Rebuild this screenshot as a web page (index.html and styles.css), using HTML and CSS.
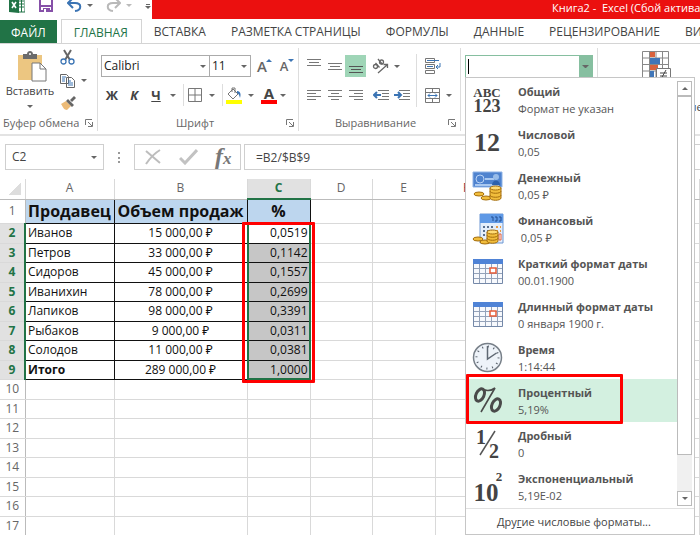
FILE: index.html
```html
<!DOCTYPE html>
<html lang="ru">
<head>
	<meta charset="utf-8">
	<meta name="viewport" content="width=device-width, initial-scale=1">
	<title>Книга2 - Excel</title>
	<link rel="stylesheet" href="styles.css">
</head>
<body>
<div class="topbar">
	<div class="quick">
		<svg class="xl" width="16" height="16" viewBox="0 0 16 16"><path d="M9 1h7v14H9z" fill="#fff" stroke="#217346"/><path d="M10 4h5M10 7h5M10 10h5M12.500 1v14" stroke="#217346"/><path d="M0 1l10-1v16L0 15z" fill="#217346"/><path d="M3 5l4 6M7 5l-4 6" stroke="#fff" stroke-width="1.600"/></svg>
		<button class="q-save" aria-label="Сохранить"><svg width="14" height="16" viewBox="0 0 14 16"><path d="M1 1h12v13H1z" fill="#fff" stroke="#8650a8" stroke-width="2"/><path d="M1 8h12v2H1zM4 11h7v4H4z" fill="#8650a8"/><path d="M5 12h2v3H5z" fill="#fff"/></svg></button>
		<button class="q-undo" aria-label="Отменить"><svg width="15" height="16" viewBox="0 0 15 16"><path d="M1 6h7c7 0 7 7 0 8M6 1L1 6l5 5" fill="none" stroke="#3b74b4" stroke-width="2"/></svg><i class="caret"></i></button>
		<button class="q-redo" aria-label="Вернуть"><svg width="15" height="16" viewBox="0 0 15 16"><path d="M14 6H7C0 6 0 13 7 14M9 1l5 5-5 5" fill="none" stroke="#b9b9b9" stroke-width="2"/></svg><i class="caret light"></i></button>
		<button class="q-more" aria-label="Настройка панели"><i class="caret"></i></button>
	</div>
	<div class="title">Книга2 -&nbsp; Excel (Сбой активации продукта)</div>
</div>

<nav class="tabs">
	<a href="#" class="file">ФАЙЛ</a>
	<a href="#" class="active">ГЛАВНАЯ</a>
	<a href="#">ВСТАВКА</a>
	<a href="#">РАЗМЕТКА СТРАНИЦЫ</a>
	<a href="#">ФОРМУЛЫ</a>
	<a href="#">ДАННЫЕ</a>
	<a href="#">РЕЦЕНЗИРОВАНИЕ</a>
	<a href="#">ВИД</a>
</nav>

<div class="ribbon">
	<div class="group clipboard">
		<div class="tools">
			<button class="paste">
				<svg width="30" height="32" viewBox="0 0 30 32"><path d="M1 4h24v25H1z" fill="#ecc681"/><path d="M6 3h4c0-4 6-4 6 0h4v5H6z" fill="#6b6b6b"/><circle cx="13" cy="3" r="1" fill="#fff"/><path d="M15 12h8l6 6v12H15z" fill="#fff" stroke="#777"/><path d="M23 12v6h6" fill="none" stroke="#777"/></svg>
				<span>Вставить</span>
				<i class="caret"></i>
			</button>
			<div class="side">
				<button aria-label="Вырезать"><svg width="15" height="16" viewBox="0 0 15 16"><path d="M4 1l6 10M11 1L5 11" stroke="#666" stroke-width="2"/><circle cx="3.500" cy="12.500" r="2.500" fill="#fff" stroke="#3b74b4" stroke-width="1.300"/><circle cx="11.500" cy="12.500" r="2.500" fill="#fff" stroke="#3b74b4" stroke-width="1.300"/></svg></button>
				<button aria-label="Копировать"><svg width="15" height="15" viewBox="0 0 15 15"><path d="M.5 1.500h6l2 2v7h-8zM6.500 4.500h5l3 3v7h-8z" fill="#fff" stroke="#666"/><path d="M2 4h4M2 6h3M2 8h3M8 8h3M8 10h5M8 12h5" stroke="#3b74b4"/></svg><i class="caret"></i></button>
				<button aria-label="Формат по образцу"><svg width="16" height="15" viewBox="0 0 16 15"><path d="M1 8l5-3 5 5-4 4c-3 0-4-3-6-6z" fill="#ecbb78"/><path d="M6 5l2-2 6 6-2 2zM10 4l4-4 2 2-4 4z" fill="#666"/></svg></button>
			</div>
		</div>
		<div class="caption"><span>Буфер обмена</span><svg class="launch" width="8" height="8" viewBox="0 0 8 8"><use href="#corner"/></svg></div>
	</div>

	<div class="group font">
		<div class="tools rows">
			<div class="row">
				<label class="pick name"><select aria-label="Шрифт"><option>Calibri</option></select><i class="caret"></i></label>
				<label class="pick size"><select aria-label="Размер шрифта"><option>11</option></select><i class="caret"></i></label>
				<button class="grow" aria-label="Увеличить размер">A<i class="tri up"></i></button>
				<button class="shrink" aria-label="Уменьшить размер">A<i class="tri"></i></button>
			</div>
			<div class="row letters">
				<button class="b">Ж</button>
				<button class="i">К</button>
				<button class="u">Ч</button>
				<i class="caret"></i>
				<span class="sep"></span>
				<button aria-label="Границы"><svg width="14" height="14" viewBox="0 0 14 14"><path d="M.5.5h13v13H.5zM7 0v14M0 7h14" fill="none" stroke="#777"/></svg></button>
				<i class="caret"></i>
				<span class="sep"></span>
				<button aria-label="Цвет заливки"><svg width="16" height="17" viewBox="0 0 16 17"><path d="M2 7l5-5 5 5-5 5zM6 5V1h3v5" fill="#fff" stroke="#777"/><path d="M11 4c4 0 4 4 3 7-1-3-1-4-3-5z" fill="#3b74b4"/><path d="M0 13h16v4H0z" fill="#ff0"/></svg></button>
				<i class="caret"></i>
				<button class="color" aria-label="Цвет текста">A</button>
				<i class="caret"></i>
			</div>
		</div>
		<div class="caption"><span>Шрифт</span><svg class="launch" width="8" height="8" viewBox="0 0 8 8"><use href="#corner"/></svg></div>
	</div>

	<div class="group align">
		<div class="tools">
			<div class="rows">
				<div class="row">
					<button aria-label="По верхнему краю"><svg width="14" height="16" viewBox="0 0 14 16"><path d="M0 1.500h14M2 4.500h10M0 7.500h14" stroke="#777"/></svg></button>
					<button aria-label="По середине"><svg width="14" height="16" viewBox="0 0 14 16"><path d="M0 5.500h14M2 8.500h10M0 11.500h14" stroke="#777"/></svg></button>
					<button class="on" aria-label="По нижнему краю"><svg width="14" height="16" viewBox="0 0 14 16"><path d="M0 8.500h14M2 11.500h10M0 14.500h14" stroke="#555"/></svg></button>
					<button class="gap" aria-label="Ориентация"><svg width="17" height="16" viewBox="0 0 17 16"><g fill="none" stroke="#666" stroke-width="1.300"><circle cx="3.500" cy="8.500" r="2"/><path d="M3.500 5l4 4.500M6 1l4.500 5.500"/><circle cx="9.500" cy="4" r="2"/><path d="M6 15l9-8M11.500 6.500h4V10"/></g></svg></button>
					<i class="caret"></i>
				</div>
				<div class="row">
					<button aria-label="По левому краю"><svg width="14" height="14" viewBox="0 0 14 14"><path d="M0 2.500h14M0 5.500h9M0 8.500h14M0 11.500h9" stroke="#777"/></svg></button>
					<button aria-label="По центру"><svg width="14" height="14" viewBox="0 0 14 14"><path d="M0 2.500h14M3 5.500h8M0 8.500h14M3 11.500h8" stroke="#777"/></svg></button>
					<button aria-label="По правому краю"><svg width="14" height="14" viewBox="0 0 14 14"><path d="M0 2.500h14M5 5.500h9M0 8.500h14M5 11.500h9" stroke="#777"/></svg></button>
					<button class="gap" aria-label="Уменьшить отступ"><svg width="16" height="14" viewBox="0 0 16 14"><path d="M5 2.500h11M9 5.500h7M9 8.500h7M5 11.500h11" stroke="#777"/><path d="M8 7H2M4 4L1 7l3 3" fill="none" stroke="#3b74b4" stroke-width="2"/></svg></button>
					<button aria-label="Увеличить отступ"><svg width="16" height="14" viewBox="0 0 16 14"><path d="M5 2.500h11M9 5.500h7M9 8.500h7M5 11.500h11" stroke="#777"/><path d="M0 7h6M4 4l3 3-3 3" fill="none" stroke="#3b74b4" stroke-width="2"/></svg></button>
				</div>
			</div>
			<span class="sep tall"></span>
			<div class="rows">
				<div class="row">
					<button aria-label="Перенести текст"><svg width="16" height="16" viewBox="0 0 16 16"><path d="M.5.5h9v4h-9zM.5 6.500h9v4h-9zM.5 12.500h9v3h-9z" fill="#fff" stroke="#777"/><path d="M2 2.500h12M2 8.500h6M15 5v4h-4M13 7l-2 2 2 2" fill="none" stroke="#3b74b4"/></svg></button>
				</div>
				<div class="row">
					<button aria-label="Объединить"><svg width="15" height="15" viewBox="0 0 15 15"><path d="M.5.5h14v14H.5zM0 4.500h15M0 10.500h15M7.500 0v4M7.500 11v4" fill="#fff" stroke="#777"/><path d="M3 7.500h9M5 5.500l-2 2 2 2M10 5.500l2 2-2 2" fill="none" stroke="#3b74b4"/></svg></button>
					<i class="caret"></i>
				</div>
			</div>
		</div>
		<div class="caption"><span>Выравнивание</span><svg class="launch" width="8" height="8" viewBox="0 0 8 8"><g id="corner"><path d="M.5 6V.5H7M3 3l4 4M7.500 3v4.500H3" fill="none" stroke="#777"/></g></svg></div>
	</div>

	<div class="group number">
		<div class="combo">
			<input type="text" aria-label="Числовой формат">
			<button aria-label="Открыть список"><i class="caret"></i></button>
		</div>

		<div class="menu">
			<div class="scroll">
				<div class="formats">
					<button class="format">
						<svg width="32" height="32" viewBox="0 0 32 32"><text x="15" y="13" class="ico" font-size="13">ABC</text><text x="15" y="28" class="ico" font-size="18">123</text></svg>
						<span><b>Общий</b><small>Формат не указан</small></span>
					</button>
					<button class="format">
						<svg width="32" height="32" viewBox="0 0 32 32"><text x="15" y="24" class="ico" font-size="26">12</text></svg>
						<span><b>Числовой</b><small>0,05</small></span>
					</button>
					<button class="format">
						<svg width="32" height="32" viewBox="0 0 32 32"><path d="M1 2h29v15H1z" fill="#4f83cf" stroke="#8fb3e6"/><circle cx="8" cy="9" r="4" fill="none" stroke="#b9d3f5"/><path d="M13 9h9M3 15h24" stroke="#a9c8f0" stroke-width="2"/><circle cx="24" cy="7" r="3" fill="#98bce9"/><path d="M20 15c0-6 8-6 8 0z" fill="#2d61ad"/><g fill="#f1bd3c" stroke="#a46d0d"><ellipse cx="14" cy="28" rx="5" ry="2"/><ellipse cx="7" cy="24" rx="5" ry="2"/><path d="M18 18v10c0 3 11 3 11 0V18z"/><path d="M18 21c0 3 11 3 11 0M18 25c0 3 11 3 11 0"/><ellipse cx="23.500" cy="18" rx="5.500" ry="2" fill="#ffdc76"/></g></svg>
						<span><b>Денежный</b><small>0,05 ₽</small></span>
					</button>
					<button class="format">
						<svg width="32" height="32" viewBox="0 0 32 32"><path d="M8 1h23v29H8z" fill="#e4eefb" stroke="#6d97d3"/><path d="M8 1h23v9H8z" fill="#5f99e6"/><path d="M19 4h2v4M23 4h2v4h-2M27 4h2v4h-2" fill="none" stroke="#234f91"/><path d="M11 14h12M11 18h12M11 22h8" stroke="#596f8f" stroke-width="2" stroke-dasharray="2"/><path d="M24 14h5M24 18h5" stroke="#e79a43" stroke-width="2" stroke-dasharray="2"/><path d="M27 21h2v6h-2z" fill="#fff" stroke="#e45f3c"/><g fill="#f1bd3c" stroke="#a46d0d"><ellipse cx="13" cy="29" rx="5" ry="2"/><ellipse cx="6" cy="26" rx="5" ry="2"/><path d="M15 19v9c0 3 11 3 11 0v-9z"/><path d="M15 22c0 3 11 3 11 0M15 25c0 3 11 3 11 0"/><ellipse cx="20.500" cy="19" rx="5.500" ry="2" fill="#ffdc76"/></g></svg>
						<span><b>Финансовый</b><small>&nbsp;0,05 ₽</small></span>
					</button>
					<button class="format">
						<svg width="32" height="32" viewBox="0 0 32 32"><g id="cal"><path d="M1.500 3.500h29v24h-29z" fill="#f7f9fd" stroke="#7488a8"/><path d="M7.500 7v20M13.500 7v20M19.500 7v20M25.500 7v20M2 12.500h28M2 17.500h28M2 22.500h28" stroke="#94a2b9"/><path d="M1 3h30v5H1z" fill="#4f83d6"/><path d="M18 12h6v5h-6z" fill="#fff" stroke="#e65c38" stroke-width="1.500"/></g></svg>
						<span><b>Краткий формат даты</b><small>00.01.1900</small></span>
					</button>
					<button class="format">
						<svg width="32" height="32" viewBox="0 0 32 32"><use href="#cal"/></svg>
						<span><b>Длинный формат даты</b><small>0 января 1900 г.</small></span>
					</button>
					<button class="format">
						<svg width="32" height="32" viewBox="0 0 32 32"><circle cx="15.500" cy="15.500" r="14" fill="#eef3f9" stroke="#777f88" stroke-width="1.500"/><circle cx="15.500" cy="15.500" r="11" fill="none" stroke="#555d68" stroke-width="2" stroke-dasharray="1 4.760"/><path d="M15.500 4v13l9-6" fill="none" stroke="#5f6873" stroke-width="1.500"/></svg>
						<span><b>Время</b><small>1:14:44</small></span>
					</button>
					<button class="format selected">
						<svg width="32" height="32" viewBox="0 0 32 32"><g fill="none" stroke="#4a4a4a"><ellipse cx="8" cy="10" rx="4" ry="6.500" stroke-width="3" transform="rotate(25 8 10)"/><ellipse cx="24" cy="20" rx="4" ry="6.500" stroke-width="3" transform="rotate(25 24 20)"/><path d="M10 4c4 2 9 2 13-1L9 27" stroke-width="1.600"/></g></svg>
						<span><b>Процентный</b><small>5,19%</small></span>
						<i class="mark"></i>
					</button>
					<button class="format">
						<svg width="32" height="32" viewBox="0 0 32 32"><text x="9" y="16" class="ico" font-size="20">1</text><text x="22" y="30" class="ico" font-size="20">2</text><path d="M23 3L8 27" stroke="#555" stroke-width="1.500"/></svg>
						<span><b>Дробный</b><small>0</small></span>
					</button>
					<button class="format">
						<svg width="32" height="32" viewBox="0 0 32 32"><text x="14" y="30" class="ico" font-size="25">10</text><text x="27" y="10" class="ico" font-size="13">2</text></svg>
						<span><b>Экспоненциальный</b><small>5,19E-02</small></span>
					</button>
				</div>
				<div class="bar">
					<button aria-label="Вверх"><i class="caret flip"></i></button>
					<div class="thumb"></div>
					<div class="track"></div>
					<button aria-label="Вниз"><i class="caret"></i></button>
				</div>
			</div>
			<a href="#" class="more">Дру<u>г</u>ие числовые форматы...</a>
		</div>
	</div>

	<div class="group styles">
		<svg width="30" height="32" viewBox="0 0 30 32"><path d="M1.500.5h26v26h-26zM1 7h27M1 13.500h27M1 20h27M8.500 0v27M15 0v27M21.500 0v27" fill="#fff" stroke="#888"/><path d="M9 1h5v5H9zM9 14h8v5H9z" fill="#d9623d"/><path d="M9 7h10v6H9zM9 20h4v6H9z" fill="#4076b8"/><path d="M15.500 17.500h14v13h-14z" fill="#fff" stroke="#777"/><path d="M19 22h7M19 25h7M25 19l-5 9" stroke="#444"/></svg>
		<span>Условное<br>форматирование</span>
	</div>
</div>

<div class="formula">
	<label class="cellname"><input type="text" aria-label="Имя ячейки" value="C2"><i class="caret"></i></label>
	<span class="dots"></span>
	<div class="actions">
		<button aria-label="Отмена"><svg width="18" height="16" viewBox="0 0 18 16"><path d="M2 2l14 12M16 1C11 4 6 9 2 15" fill="none" stroke="#bdbdbd" stroke-width="2"/></svg></button>
		<button aria-label="Ввод"><svg width="19" height="16" viewBox="0 0 19 16"><path d="M1 9l5 5L18 1" fill="none" stroke="#c2c2c2" stroke-width="3"/></svg></button>
		<button class="fx" aria-label="Вставить функцию"><i>f</i>x</button>
	</div>
	<input class="expr" type="text" aria-label="Строка формул" value="=B2/$B$9">
</div>

<div class="sheet">
<table>
	<colgroup><col class="c-num"><col class="c-a"><col class="c-b"><col class="c-c"><col class="c-d"><col class="c-c"><col class="c-d"><col class="c-c"><col class="c-d"><col class="c-c"><col></colgroup>
	<thead>
		<tr><th class="all"></th><th>A</th><th>B</th><th class="cur">C</th><th>D</th><th>E</th><th class="dark">F</th><th></th><th></th><th></th><th></th></tr>
	</thead>
	<tbody>
		<tr class="head"><th>1</th><td>Продавец</td><td>Объем продаж</td><td>%</td><td></td><td></td><td></td><td></td><td></td><td></td><td></td></tr>
		<tr class="data"><th>2</th><td>Иванов</td><td>15 000,00 ₽</td><td class="first">0,0519<i class="range"></i><i class="mark"></i></td><td></td><td></td><td></td><td></td><td></td><td></td><td></td></tr>
		<tr class="data"><th>3</th><td>Петров</td><td>33 000,00 ₽</td><td>0,1142</td><td></td><td></td><td></td><td></td><td></td><td></td><td></td></tr>
		<tr class="data"><th>4</th><td>Сидоров</td><td>45 000,00 ₽</td><td>0,1557</td><td></td><td></td><td></td><td></td><td></td><td></td><td></td></tr>
		<tr class="data"><th>5</th><td>Иванихин</td><td>78 000,00 ₽</td><td>0,2699</td><td></td><td></td><td></td><td></td><td></td><td></td><td></td></tr>
		<tr class="data"><th>6</th><td>Лапиков</td><td>98 000,00 ₽</td><td>0,3391</td><td></td><td></td><td></td><td></td><td></td><td></td><td></td></tr>
		<tr class="data"><th>7</th><td>Рыбаков</td><td>9 000,00 ₽</td><td>0,0311</td><td></td><td></td><td></td><td></td><td></td><td></td><td></td></tr>
		<tr class="data"><th>8</th><td>Солодов</td><td>11 000,00 ₽</td><td>0,0381</td><td></td><td></td><td></td><td></td><td></td><td></td><td></td></tr>
		<tr class="data"><th>9</th><td><b>Итого</b></td><td>289 000,00 ₽</td><td>1,0000</td><td></td><td></td><td></td><td></td><td></td><td></td><td></td></tr>
		<tr><th>10</th><td></td><td></td><td></td><td></td><td></td><td></td><td></td><td></td><td></td><td></td></tr>
		<tr><th>11</th><td></td><td></td><td></td><td></td><td></td><td></td><td></td><td></td><td></td><td></td></tr>
		<tr><th>12</th><td></td><td></td><td></td><td></td><td></td><td></td><td></td><td></td><td></td><td></td></tr>
		<tr><th>13</th><td></td><td></td><td></td><td></td><td></td><td></td><td></td><td></td><td></td><td></td></tr>
		<tr><th>14</th><td></td><td></td><td></td><td></td><td></td><td></td><td></td><td></td><td></td><td></td></tr>
		<tr><th>15</th><td></td><td></td><td></td><td></td><td></td><td></td><td></td><td></td><td></td><td></td></tr>
		<tr><th>16</th><td></td><td></td><td></td><td></td><td></td><td></td><td></td><td></td><td></td><td></td></tr>
		<tr><th>17</th><td></td><td></td><td></td><td></td><td></td><td></td><td></td><td></td><td></td><td></td></tr>
	</tbody>
</table>
</div>
</body>
</html>
```
FILE: styles.css
```css
* {
	box-sizing: border-box;
}
body {
	margin: 0;
	background: #fff;
	color: #444;
	font-family: "Open Sans", "Noto Sans", sans-serif;
	font-size: 11px;
	line-height: 16px;
	overflow-x: hidden;
}
button, input, select {
	font: inherit;
	color: inherit;
	background: none;
	border: none;
	margin: 0;
	padding: 0;
}
svg {
	display: block;
	flex: none;
}
a {
	color: inherit;
	text-decoration: none;
}
.caret {
	flex: none;
	display: block;
	border: 3px solid transparent;
	border-top-color: #666;
	border-bottom: none;
}
.caret.light {
	border-top-color: #bbb;
}
.caret.flip {
	transform: rotate(180deg);
}
.mark {
	position: absolute;
	border: 3px solid #f00;
	border-radius: 1px;
	pointer-events: none;
}

/* title bar */
.topbar {
	display: flex;
	height: 19px;
	overflow: hidden;
}
.quick {
	display: flex;
	align-items: flex-start;
	width: 152px;
	padding-left: 9px;
	flex: none;
}
.quick svg {
	margin-top: -3px;
}
.quick button {
	display: flex;
	align-items: flex-start;
	gap: 5px;
}
.quick .caret {
	margin-top: 4px;
}
.q-save {
	width: 28px;
	justify-content: center;
	margin: 0 0 0 7px;
}
.q-undo, .q-redo {
	width: 39px;
}
.quick .q-undo {
	margin-left: 7px;
}
.quick .q-more .caret {
	margin-top: 6px;
	box-shadow: 0 -3px 0 -1px #666;
}
.title {
	flex: 1;
	background: #eb100f;
	color: #fff;
	padding-left: 400px;
	white-space: nowrap;
	overflow: hidden;
}

/* tabs */
.tabs {
	display: flex;
	height: 25px;
	font-size: 12px;
	line-height: 25px;
	white-space: nowrap;
	overflow: hidden;
	border-bottom: 1px solid #d4d4d4;
}
.tabs a {
	padding: 0 13px 0 12px;
	flex: none;
}
.tabs .file {
	background: #217346;
	color: #fff;
	padding: 0 11px;
	margin: 1px 4px 0 0;
}
.tabs .active {
	color: #217346;
	border: 1px solid #d4d4d4;
	border-bottom: none;
}

/* ribbon */
.ribbon {
	display: flex;
	padding: 4px 0 3px;
	border-bottom: 2px solid #e3e3e3;
}
.group {
	display: flex;
	flex-direction: column;
	flex: none;
	height: 83px;
	border-right: 1px solid #ddd;
}
.tools {
	display: flex;
	flex: 1;
}
.tools button {
	display: flex;
	align-items: center;
	justify-content: center;
}
.caption {
	display: flex;
	align-items: center;
	padding: 0 4px 2px 3px;
	color: #666;
	height: 14px;
}
.caption span {
	flex: 1;
	text-align: center;
	white-space: nowrap;
}
.rows {
	display: flex;
	flex-direction: column;
	flex: none;
	gap: 7px;
	padding-top: 7px;
}
.row {
	display: flex;
	align-items: center;
	height: 22px;
}
.row button {
	height: 22px;
	flex: none;
}
.sep {
	width: 1px;
	height: 22px;
	background: #ddd;
}
.clipboard {
	width: 98px;
}
.clipboard .caption span {
	text-align: left;
}
.tools .paste {
	flex-direction: column;
	justify-content: flex-start;
	width: 60px;
	padding-top: 3px;
}
.paste svg {
	margin-left: 4px;
}
.paste .caret {
	margin-top: 6px;
}
.side {
	display: flex;
	flex-direction: column;
	gap: 7px;
	padding-top: 1px;
}
.side button {
	height: 16px;
	gap: 6px;
	justify-content: flex-start;
}
.font {
	width: 201px;
	padding-left: 3px;
}
.tools.rows {
	flex: 1;
}
.pick {
	display: flex;
	align-items: center;
	height: 22px;
	border: 1px solid #ababab;
	padding-right: 3px;
	color: #222;
}
.pick select {
	appearance: none;
	flex: 1;
	min-width: 0;
	padding-left: 2px;
	font-size: 12px;
}
.pick.name {
	width: 109px;
}
.pick.size {
	width: 42px;
	margin-left: -1px;
}
.grow, .shrink {
	position: relative;
	width: 22px;
	font-weight: 600;
	color: #666;
}
.grow {
	font-size: 15px;
}
.shrink {
	font-size: 13px;
}
.tri {
	position: absolute;
	top: 4px;
	right: 1px;
	border: 3px solid transparent;
	border-top-color: #3b74b4;
	border-bottom: none;
}
.tri.up {
	transform: rotate(180deg);
}
.letters button {
	width: 22px;
	font-size: 13px;
	font-weight: 700;
}
.letters .i {
	font-style: italic;
}
.letters .u {
	text-decoration: underline;
}
.letters .caret {
	margin: 0 7px 0 3px;
}
.letters .color {
	width: 16px;
	height: 17px;
	font-size: 15px;
	border-bottom: 4px solid #f00;
	line-height: 12px;
}
.align {
	width: 162px;
	padding-left: 4px;
}
.align .caption {
	padding-left: 0;
}
.align .row button {
	width: 21px;
}
.align .row .on {
	background: #9fd5b7;
}
.align .row .gap {
	margin-left: 4px;
}
.align .row .caret {
	margin-left: 3px;
}
.sep.tall {
	height: 53px;
	margin: 6px 5px 0 4px;
}
.number {
	position: relative;
	width: 137px;
	padding: 7px 4px 0;
}
.combo {
	display: flex;
	height: 23px;
	border: 1px solid #86bfa0;
}
.combo input {
	flex: 1;
	min-width: 0;
	padding-left: 4px;
	/* text cursor */
	background: linear-gradient(#000, #000) 2px 3px / 1px 15px no-repeat;
}
.combo button {
	width: 13px;
	padding: 0 3px;
	background: #86bfa0;
}
.styles {
	flex: 1 0 116px;
	align-items: center;
	text-align: center;
	padding-top: 3px;
	border: none;
}

/* number format list */
.menu {
	position: absolute;
	top: 29px;
	left: 4px;
	width: 230px;
	z-index: 5;
	background: #fff;
	border: 1px solid #c6c6c6;
}
.scroll {
	display: flex;
	border-bottom: 1px solid #e1e1e1;
	padding-right: 2px;
}
.formats {
	flex: 1;
}
.format {
	position: relative;
	display: flex;
	align-items: center;
	width: 100%;
	height: 43px;
	padding-left: 6px;
	gap: 14px;
	text-align: left;
	color: #555;
}
.format b, .format small {
	display: block;
	font-size: 11px;
	line-height: 17px;
	white-space: nowrap;
}
.format.selected {
	background: #d3f0e0;
}
.format .mark {
	left: 0;
	top: -5px;
	width: 157px;
	height: 50px;
}
.ico {
	font-family: "Liberation Serif", serif;
	font-weight: 700;
	fill: #444;
	text-anchor: middle;
}
.bar {
	display: flex;
	flex-direction: column;
	width: 15px;
	margin: 3px 0 2px;
	background: #f0f0f0;
}
.bar button {
	display: flex;
	align-items: center;
	justify-content: center;
	height: 15px;
	background: #fff;
	border: 1px solid #bbb;
}
.thumb {
	flex: 10 0 0;
	background: #fff;
	border: 1px solid #bbb;
}
.track {
	flex: 1 0 0;
}
.more {
	display: block;
	padding-left: 31px;
	line-height: 25px;
}

/* formula bar */
.formula {
	display: flex;
	align-items: center;
	padding: 8px 0 9px 5px;
}
.cellname, .actions, .expr {
	height: 26px;
	border: 1px solid #cfcfcf;
}
.cellname {
	display: flex;
	align-items: center;
	width: 99px;
	padding: 0 6px;
}
.cellname input {
	flex: 1;
	min-width: 0;
	font-size: 12px;
}
.dots {
	height: 11px;
	margin: 0 14px;
	border-left: 2px dotted #999;
}
.actions {
	display: flex;
	align-items: center;
	justify-content: space-around;
	width: 107px;
}
.fx {
	font-family: "Liberation Serif", serif;
	font-size: 17px;
	font-style: italic;
	font-weight: 700;
	color: #777;
}
.fx i {
	font-size: 24px;
}
.formula .expr {
	flex: 1;
	margin-left: 3px;
	padding-left: 11px;
	font-size: 12px;
	border-right: none;
}

/* sheet */
table {
	width: 100%;
	table-layout: fixed;
	border-collapse: collapse;
}
.c-num { width: 25px; }
.c-a { width: 89px; }
.c-b { width: 133px; }
.c-c { width: 63px; }
.c-d { width: 62px; }
tr {
	height: 19px;
}
tbody tr:nth-child(even) {
	height: 20px;
}
th, td {
	padding: 0;
	border: 1px solid #d9d9d9;
	line-height: 16px;
}
th {
	font-size: 12px;
	font-weight: 400;
	color: #666;
	border-left-color: #e5e5e5;
}
tbody th {
	border-left: none;
	border-right-color: #bbb;
}
thead tr {
	height: 20px;
}
thead th {
	border-top: none;
	border-bottom-color: #bbb;
	padding-bottom: 2px;
}
.all {
	background: linear-gradient(135deg, transparent 50%, #ddd 50%) 9px 4px / 12px 12px no-repeat;
	border-left: none;
}
.dark {
	color: #8c2f3e;
}
thead .cur {
	background: #e1e1e1;
	color: #217346;
	font-weight: 700;
	border-bottom: 2px solid #217346;
}
tbody .head {
	height: 24px;
}
.head td:nth-child(-n+4), .data td:nth-child(-n+4) {
	border: 1px solid #111;
	color: #111;
}
.head td:nth-child(-n+4) {
	background: #bdd6ee;
	font-size: 16px;
	font-weight: 700;
	text-align: center;
	white-space: nowrap;
}
.data td {
	font-size: 12px;
	padding: 0 2px;
}
.data td:nth-child(3) {
	text-align: center;
}
.data td:nth-child(4) {
	text-align: right;
	background: #c6c6c6;
}
.data td.first {
	position: relative;
	background: #fff;
}
.data th {
	background: #e1e1e1;
	color: #217346;
	font-weight: 700;
	border-right: 2px solid #217346;
}
.range {
	position: absolute;
	top: -2px;
	left: -1px;
	width: 64px;
	height: 158px;
	border: 2px solid #217346;
}
.data .mark {
	top: -2px;
	left: -6px;
	width: 73px;
	height: 161px;
}
```
